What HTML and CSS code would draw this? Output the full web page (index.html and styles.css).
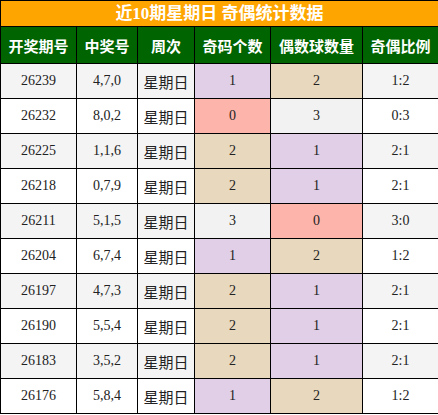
FILE: index.html
```html
<!DOCTYPE html>
<html>
<head>
<meta charset="utf-8">
<link rel="stylesheet" href="styles.css">
</head>
<body>
<table class="stats">
  <colgroup>
    <col class="c1"><col class="c2"><col class="c3"><col class="c4"><col class="c5"><col class="c6">
  </colgroup>
  <thead>
    <tr class="title"><th colspan="6">近10期星期日 奇偶统计数据</th></tr>
    <tr class="head"><th>开奖期号</th><th>中奖号</th><th>周次</th><th>奇码个数</th><th>偶数球数量</th><th>奇偶比例</th></tr>
  </thead>
  <tbody>
    <tr><td>26239</td><td>4,7,0</td><td class="wk">星期日</td><td class="pu">1</td><td class="tan">2</td><td>1:2</td></tr>
    <tr><td>26232</td><td>8,0,2</td><td class="wk">星期日</td><td class="pk">0</td><td class="nt">3</td><td>0:3</td></tr>
    <tr><td>26225</td><td>1,1,6</td><td class="wk">星期日</td><td class="tan">2</td><td class="pu">1</td><td>2:1</td></tr>
    <tr><td>26218</td><td>0,7,9</td><td class="wk">星期日</td><td class="tan">2</td><td class="pu">1</td><td>2:1</td></tr>
    <tr><td>26211</td><td>5,1,5</td><td class="wk">星期日</td><td class="nt">3</td><td class="pk">0</td><td>3:0</td></tr>
    <tr><td>26204</td><td>6,7,4</td><td class="wk">星期日</td><td class="pu">1</td><td class="tan">2</td><td>1:2</td></tr>
    <tr><td>26197</td><td>4,7,3</td><td class="wk">星期日</td><td class="tan">2</td><td class="pu">1</td><td>2:1</td></tr>
    <tr><td>26190</td><td>5,5,4</td><td class="wk">星期日</td><td class="tan">2</td><td class="pu">1</td><td>2:1</td></tr>
    <tr><td>26183</td><td>3,5,2</td><td class="wk">星期日</td><td class="tan">2</td><td class="pu">1</td><td>2:1</td></tr>
    <tr><td>26176</td><td>5,8,4</td><td class="wk">星期日</td><td class="pu">1</td><td class="tan">2</td><td>1:2</td></tr>
  </tbody>
</table>
</body>
</html>
```
FILE: styles.css
```css
html, body {
  margin: 0;
  padding: 0;
  background: #ffffff;
}
.stats {
  width: 438px;
  border-collapse: collapse;
  table-layout: fixed;
  border: 1px solid #000;
  font-family: "Liberation Serif", "Noto Sans CJK SC", serif;
  font-size: 14px;
  color: #222;
}
.c1 { width: 76px; }
.c2 { width: 61px; }
.c3 { width: 57px; }
.c4 { width: 76px; }
.c5 { width: 92px; }
.c6 { width: 76px; }
.stats th, .stats td {
  border: 1px solid #000;
  padding: 0;
  text-align: center;
  vertical-align: middle;
}
.title th {
  background: #ffa500;
  color: #fff;
  font-size: 17px;
  font-weight: bold;
  height: 25px;
  line-height: 20px;
}
.head th {
  background: #006400;
  color: #fff;
  font-size: 15px;
  font-weight: bold;
  height: 36px;
  font-family: "Noto Sans CJK SC", sans-serif;
}
.stats td {
  height: 34px;
  line-height: 20px;
}
tbody tr:nth-child(odd) td { background: #f4f4f4; }
tbody tr:nth-child(even) td { background: #ffffff; }
.stats td.wk {
  font-family: "Noto Sans CJK SC", sans-serif;
  font-size: 15px;
  line-height: 20px;
  padding-top: 1px;
  height: 33px;
}
.stats td.nt { background: #f2f2f2; }
.stats td.pu { background: #e0cfe6; }
.stats td.tan { background: #e8d8bd; }
.stats td.pk { background: #fdb4ab; }
```
